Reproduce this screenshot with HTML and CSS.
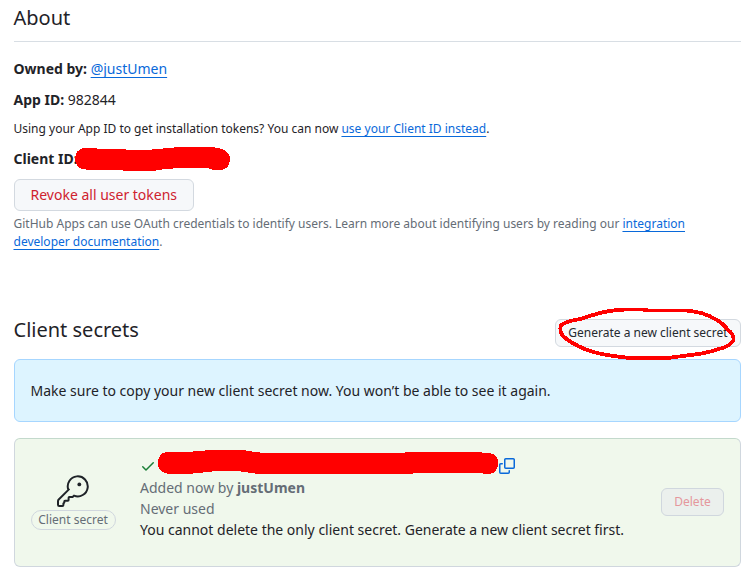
FILE: index.html
```html
<!DOCTYPE html>
<html lang="en">
<head>
<meta charset="utf-8">
<title>About</title>
<link rel="stylesheet" href="styles.css">
</head>
<body>
<main class="page">
  <h2 class="heading heading-ruled">About</h2>
  <p class="row"><strong>Owned by:</strong> <a href="#">@justUmen</a></p>
  <p class="row"><strong>App ID:</strong> 982844</p>
  <p class="row small">Using your App ID to get installation tokens? You can now <a href="#">use your Client ID instead</a>.</p>
  <p class="row"><strong>Client ID:</strong></p>
  <button class="btn btn-danger">Revoke all user tokens</button>
  <p class="note small">GitHub Apps can use OAuth credentials to identify users. Learn more about identifying users by reading our <a href="#">integration developer documentation</a>.</p>

  <div class="subhead">
    <h2 class="heading">Client secrets</h2>
    <button class="btn btn-sm btn-new">Generate a new client secret</button>
  </div>
  <div class="flash">Make sure to copy your new client secret now. You won’t be able to see it again.</div>

  <section class="secret">
    <div class="secret-kind">
      <svg class="key" viewBox="0 0 32 32" width="32" height="32">
        <path d="M11.3 14.6A10 10 0 1 1 17 20.6L15.6 22H12.3Q11.6 22 11.6 22.7V25Q11.6 25.7 10.9 25.7H8Q7.3 25.7 7.3 26.4V27.6L6.4 28.5V30Q6.4 31 5.4 31H2.2Q1 31 1 29.8V26.2Q1 25.2 1.7 24.5L11.9 14.4Z"/>
        <circle cx="22.3" cy="9.4" r="1.9"/>
      </svg>
      <span class="label">Client secret</span>
    </div>
    <div class="secret-info">
      <div class="token">
        <svg class="check" viewBox="0 0 16 16" width="16" height="16"><path d="M13.78 4.22a.75.75 0 0 1 0 1.06l-7.25 7.25a.75.75 0 0 1-1.06 0L2.22 9.28a.751.751 0 0 1 .018-1.042.751.751 0 0 1 1.042-.018L6 10.94l6.72-6.72a.75.75 0 0 1 1.06 0Z"/></svg>
        <svg class="copy" viewBox="0 0 16 16" width="16" height="16"><path d="M0 6.75C0 5.784.784 5 1.75 5h1.5a.75.75 0 0 1 0 1.5h-1.5a.25.25 0 0 0-.25.25v7.5c0 .138.112.25.25.25h7.5a.25.25 0 0 0 .25-.25v-1.5a.75.75 0 0 1 1.5 0v1.5A1.75 1.75 0 0 1 9.25 16h-7.5A1.75 1.75 0 0 1 0 14.25Z"/><path d="M5 1.75C5 .784 5.784 0 6.75 0h7.5C15.216 0 16 .784 16 1.75v7.5A1.75 1.75 0 0 1 14.25 11h-7.5A1.75 1.75 0 0 1 5 9.25Zm1.75-.25a.25.25 0 0 0-.25.25v7.5c0 .138.112.25.25.25h7.5a.25.25 0 0 0 .25-.25v-7.5a.25.25 0 0 0-.25-.25Z"/></svg>
      </div>
      <div class="muted">Added now by <strong>justUmen</strong></div>
      <div class="muted">Never used</div>
      <div>You cannot delete the only client secret. Generate a new client secret first.</div>
    </div>
    <button class="btn btn-sm btn-danger btn-off" disabled>Delete</button>
  </section>
</main>

<!-- Marker strokes drawn over the page -->
<svg class="marker" viewBox="0 0 754 577" width="754" height="577">
  <path class="fill" d="M83 148H96L98 149H121L131 150H146L158 149L168 148L180 147H212L222 149Q230 152 230 160Q229 169 221 170H213L207 168H180L165 169L153 171H124L121 170H89L82 169Q75 166 75 158Q76 150 83 148Z"/>
  <path class="fill" d="M166 452H187L198 451L212 450H243L255 452L265 453H405V452H482V453H490Q498 455 498 463Q498 472 490 474H483L482 473H413V474H258L245 472L236 471H217L198 473L188 474H170Q158 473 158 463Q158 454 166 452Z"/>
  <path class="ring" d="M561.5 325Q567 321 580 319L598 313.5Q611 310 626 309.5L642 309.5L648 310.5H686Q704 312 715 319Q723 323 728 330Q734 334 733.5 340Q731 346 719 349Q704 354 690 355L668 358H629L614 356Q598 354 587 350Q570 343 563 336Q559 331 561 325"/>
</svg>
</body>
</html>
```
FILE: styles.css
```css
* { box-sizing: border-box; }

body {
  margin: 0;
  background: #fff;
  color: #1f2328;
  font: 14px/21px "Noto Sans", sans-serif;
}

.page { width: 741px; padding: 3px 0 0 13.5px; }

.heading { margin: 0; font-size: 20px; line-height: 30px; font-weight: 400; }
.heading-ruled { padding-bottom: 8px; border-bottom: 1px solid #d8dee4; margin-bottom: 16px; }

strong { font-weight: 700; }
a { color: #0969da; text-decoration: underline; text-underline-offset: 3px; text-decoration-skip-ink: none; }

.row { margin: 0 0 10px; }
.small { font-size: 12px; line-height: 18px; }
.note { margin: 4px 0 0; color: #656d76; }
.muted { color: #656d76; }

.btn {
  display: block;
  height: 32px;
  padding: 0 16px;
  border: 1px solid #d3d9e0;
  border-radius: 6px;
  background: #f6f8fa;
  color: #24292f;
  font: 400 14px/20px "Noto Sans", sans-serif;
  white-space: nowrap;
}
.btn-sm { height: 28px; padding: 0 12px; font-size: 12px; }
.btn-new { width: 186px; }
.btn-danger { color: #cf222e; }
.btn-off { width: 63px; margin-bottom: 2px; background: #ebf0ed; border-color: #d0d7de; color: #e5979c; }

.subhead { display: flex; justify-content: space-between; align-items: flex-end; height: 32px; margin: 64px 0 12px; }
.subhead .heading { align-self: flex-start; }

.flash { padding: 20px 16px; border: 1px solid #a6d6ff; border-radius: 6px; background: #ddf4ff; }

.secret {
  display: flex;
  align-items: center;
  height: 129px;
  margin-top: 16px;
  padding: 0 16px;
  border: 1px solid #d0d7de;
  border-top-color: #c3d9cc;
  border-radius: 6px;
  background: #f0f8ec;
}
.secret-kind { display: flex; flex-direction: column; align-items: center; width: 85px; margin-right: 24.5px; gap: 3px; }
.key { display: block; margin-right: 1px; fill: none; stroke: #1f2328; stroke-width: 2; stroke-linejoin: round; }
.key circle { fill: #1f2328; stroke: none; }
.label { width: 85px; height: 20px; border: 1px solid #d0d7de; border-radius: 10px; color: #656d76; font-size: 12px; line-height: 18px; text-align: center; }

.secret-info { flex: 1; margin-top: -9px; }
.token { display: flex; align-items: flex-start; height: 21px; padding-top: 2px; }
.check { fill: #1a7f37; }
.copy { margin-left: 343px; fill: #0969da; }

.marker { position: absolute; left: 0; top: 0; pointer-events: none; }
.fill { fill: #f00; shape-rendering: crispEdges; }
.ring { fill: none; stroke: #f00; stroke-width: 3.8; stroke-linejoin: round; stroke-linecap: round; shape-rendering: crispEdges; }
```
